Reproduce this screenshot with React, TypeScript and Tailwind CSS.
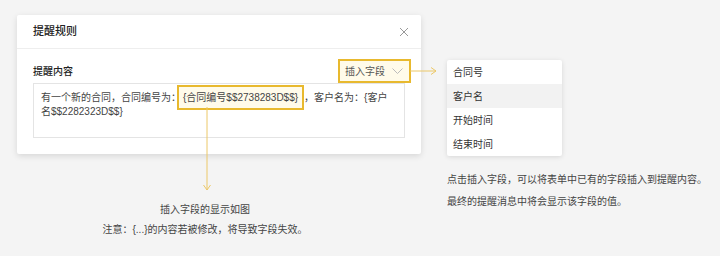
import React from "react";

const font = { fontFamily: '"Liberation Sans", "Noto Sans CJK SC", sans-serif' };

const fields = ["合同号", "客户名", "开始时间", "结束时间"];

const App = () => {
  return (
    <div
      className="w-[720px] h-[256px] bg-[#f4f4f4] flex pl-[17px] pt-[15px] text-[10px] text-[#333]"
      style={font}
    >
      {/* left: dialog + note */}
      <div className="w-[404px] flex flex-col">
        <div className="bg-white rounded-[2px] shadow-[0_2px_6px_rgba(0,0,0,0.12)]">
          <div className="h-[34px] flex items-center justify-between px-[16px] border-b border-[#eeeeee]">
            <span className="text-[11px] font-medium text-[#222]">提醒规则</span>
            <svg width="10" height="10" viewBox="0 0 10 10" className="mr-[-4px]">
              <path d="M1 1L9 9M9 1L1 9" stroke="#999" strokeWidth="1" />
            </svg>
          </div>
          <div className="px-[16px] pt-[10px] pb-[16px]">
            <div className="flex items-center justify-between h-[24px]">
              <span className="font-medium text-[#222]">提醒内容</span>
              <div className="relative mr-[-6px] h-[24px] flex items-center gap-[7px] pl-[5px] pr-[6px] border-2 border-[#e8b92e] bg-[#fffbea] text-[#555]">
                <span>插入字段</span>
                <svg width="11" height="7" viewBox="0 0 11 7">
                  <path d="M0.5 0.5L5.5 5.5L10.5 0.5" stroke="#bbb" fill="none" strokeWidth="1" />
                </svg>
                <svg
                  width="28"
                  height="10"
                  viewBox="0 0 28 10"
                  className="absolute left-full top-1/2 -translate-y-1/2 ml-[1px]"
                >
                  <path d="M0 5H26M21 1.5L26 5L21 8.5" stroke="#ecc868" fill="none" strokeWidth="1" />
                </svg>
              </div>
            </div>
            <div className="h-[55px] border border-[#e4e4e4] px-[7px] pt-[7px] leading-[14px] text-[#444]">
              有一个新的合同，合同编号为：
              <span className="relative ml-[-4px] py-[5px] px-[4px] border-2 border-[#e8b92e] bg-[#fffbea]">
                {"{合同编号$$2738283D$$}"}
                <svg
                  width="10"
                  height="85"
                  viewBox="0 0 10 85"
                  className="absolute top-full left-[23px] mt-[-1px]"
                >
                  <path d="M5 0V83M1.5 78L5 83L8.5 78" stroke="#ecc868" fill="none" strokeWidth="1" />
                </svg>
              </span>
              ，客户名为：{"{客户"}
              <br />
              {"名$$2282323D$$}"}
            </div>
          </div>
        </div>
        <div className="w-[376px] mt-[46px] text-center leading-[20px] text-[#444]">
          <div>插入字段的显示如图</div>
          <div>注意：{"{...}"}的内容若被修改，将导致字段失效。</div>
        </div>
      </div>

      {/* right: field menu + description */}
      <div className="ml-[26px] pt-[45px] flex flex-col">
        <div className="w-[115px] bg-white rounded-[2px] shadow-[0_1px_5px_rgba(0,0,0,0.12)]">
          {fields.map((f, i) => (
            <div
              key={f}
              className={
                i === 1
                  ? "h-[24px] flex items-center px-[6px] bg-[#f2f2f2]"
                  : "h-[24px] flex items-center px-[6px]"
              }
            >
              {f}
            </div>
          ))}
        </div>
        <div className="mt-[13px] leading-[22px] text-[#444]">
          <div>点击插入字段，可以将表单中已有的字段插入到提醒内容。</div>
          <div>最终的提醒消息中将会显示该字段的值。</div>
        </div>
      </div>
    </div>
  );
};

export default App;
